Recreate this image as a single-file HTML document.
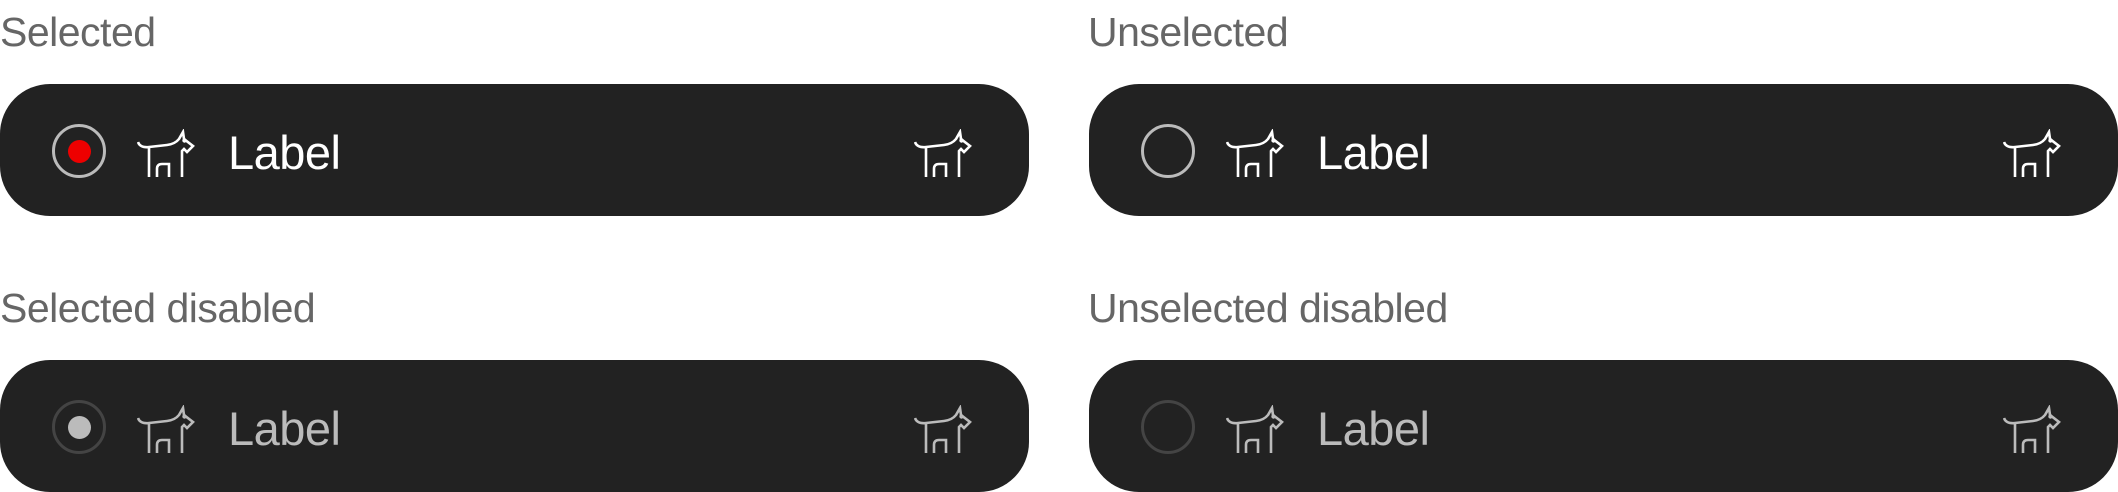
<!DOCTYPE html>
<html><head><meta charset="utf-8"><style>
body{margin:0;width:2118px;height:492px;background:#fff;position:relative;overflow:hidden;font-family:"Liberation Sans",Arial,sans-serif}
.t{position:absolute;font-size:41px;color:#666;font-weight:300;letter-spacing:-0.5px}
.b{position:absolute;height:132px;width:1029px;background:#222;border-radius:50px}
.r{position:absolute;left:52px;top:40px;width:54px;height:54px;border-radius:50%;box-sizing:border-box;border:3px solid #bbb}
.d{position:absolute;left:12.5px;top:12.5px;width:23px;height:23px;border-radius:50%;background:#e00}
.l{position:absolute;left:228px;top:41px;font-size:47px;color:#fff;letter-spacing:-0.5px}
svg{position:absolute}
</style></head><body>
<svg width="0" height="0"><defs><g id="dog" fill="none" stroke-width="2.6" stroke-linejoin="miter"><path d="M1,13 q2,6 11,5 L30,16 q8,-1 12,-6 L46,3 L47,10 L56,17 L50,23 L47,20 L45,22 L45,48 M12,18 L12,48 M20,48 L20,40 q0,-5 5,-5 L32,35 L32,48"/><circle cx="47.5" cy="11.5" r="1.3" stroke-width="1.8"/></g></defs></svg>

<div class="t" style="left:0;top:9px">Selected</div>
<div class="t" style="left:1088px;top:9px">Unselected</div>
<div class="t" style="left:0;top:285px">Selected disabled</div>
<div class="t" style="left:1088px;top:285px">Unselected disabled</div>

<div class="b" style="left:0;top:84px">
<div class="r"><div class="d"></div></div>
<svg style="left:137px;top:45px" width="60" height="50" stroke="#fff"><use href="#dog"/></svg>
<div class="l">Label</div>
<svg style="left:914px;top:45px" width="60" height="50" stroke="#fff"><use href="#dog"/></svg>
</div>

<div class="b" style="left:1089px;top:84px">
<div class="r"></div>
<svg style="left:137px;top:45px" width="60" height="50" stroke="#fff"><use href="#dog"/></svg>
<div class="l">Label</div>
<svg style="left:914px;top:45px" width="60" height="50" stroke="#fff"><use href="#dog"/></svg>
</div>

<div class="b" style="left:0;top:360px">
<div class="r" style="border-color:#444"><div class="d" style="background:#bbb"></div></div>
<svg style="left:137px;top:45px" width="60" height="50" stroke="#bbb"><use href="#dog"/></svg>
<div class="l" style="color:#bbb">Label</div>
<svg style="left:914px;top:45px" width="60" height="50" stroke="#bbb"><use href="#dog"/></svg>
</div>

<div class="b" style="left:1089px;top:360px">
<div class="r" style="border-color:#444"></div>
<svg style="left:137px;top:45px" width="60" height="50" stroke="#bbb"><use href="#dog"/></svg>
<div class="l" style="color:#bbb">Label</div>
<svg style="left:914px;top:45px" width="60" height="50" stroke="#bbb"><use href="#dog"/></svg>
</div>
</body></html>
